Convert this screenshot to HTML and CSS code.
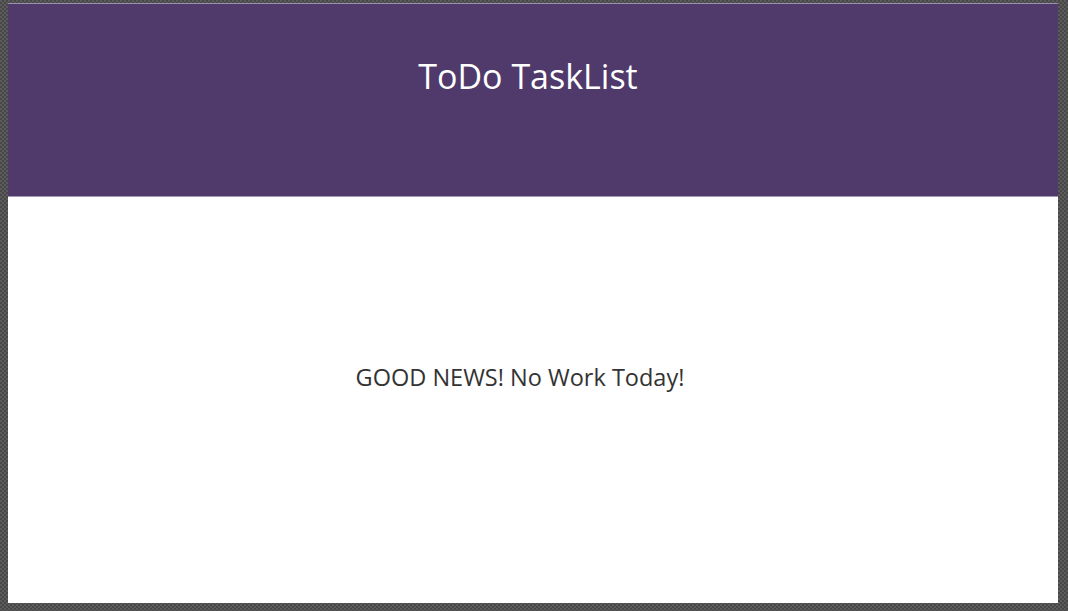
FILE: index.html
```html
<!DOCTYPE html>
<html>
<head>
<meta charset="utf-8">
<link rel="stylesheet" href="styles.css">
</head>
<body>
<div class="frame">
  <div class="app">
    <header class="header">
      <h1 class="title">ToDo TaskList</h1>
    </header>
    <main class="content">
      <p class="empty">GOOD NEWS! No Work Today!</p>
    </main>
  </div>
</div>
</body>
</html>
```
FILE: styles.css
```css
html, body {
  margin: 0;
  height: 100%;
}
body {
  background-color: #525252;
  background-image: repeating-conic-gradient(#474747 0 25%, #5c5c5c 0 50%);
  background-size: 4px 4px;
  font-family: "Open Sans", "Noto Sans", sans-serif;
}
.frame {
  box-sizing: border-box;
  height: 100%;
  padding: 3px 10px 8px 8px;
  display: flex;
}
.app {
  flex: 1;
  display: flex;
  flex-direction: column;
  background: #ffffff;
  border-top: 1px solid #9a90aa;
}
.header {
  height: 192px;
  background: #4f3a6b;
  border-bottom: 1px solid #a59bb5;
  display: flex;
  justify-content: center;
  padding-right: 10px;
}
.title {
  margin: 47px 0 0;
  font-weight: 400;
  font-size: 34px;
  line-height: 50px;
  color: #ffffff;
}
.content {
  flex: 1;
  display: flex;
  align-items: center;
  justify-content: center;
  padding-right: 26px;
  padding-bottom: 46px;
}
.empty {
  margin: 0;
  font-size: 23.5px;
  color: #333333;
}
```
